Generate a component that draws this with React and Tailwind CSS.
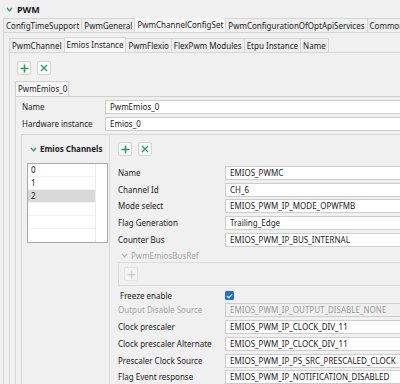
import React from "react";

const teal = "#1f9b73";

const Chevron = ({ color = teal }) => (
  <svg width="7" height="5" viewBox="0 0 7 5" className="shrink-0">
    <polyline points="1,1 3.5,3.8 6,1" fill="none" stroke={color} strokeWidth="1.3" />
  </svg>
);

const IconButton = ({ kind, disabled }) => (
  <div
    className={`w-[14px] h-[14px] flex items-center justify-center rounded-[2px] border ${
      disabled ? "border-[#e4e4e4] bg-[#f4f4f4]" : "border-[#d4d4d4] bg-[#f9f9f9]"
    }`}
  >
    {kind === "plus" ? (
      <svg width="9" height="9" viewBox="0 0 9 9">
        <path d="M4.5 0.5v8M0.5 4.5h8" stroke={disabled ? "#cfcfcf" : "#2e9d5e"} strokeWidth="1.6" />
      </svg>
    ) : (
      <svg width="8" height="8" viewBox="0 0 8 8">
        <path d="M1 1l6 6M7 1l-6 6" stroke={disabled ? "#cfcfcf" : "#2a9d74"} strokeWidth="1.4" />
      </svg>
    )}
  </div>
);

const Tab = ({ label, selected }) => (
  <div
    className={`px-[2px] border border-[#d6d6d6] -ml-px first:ml-0 whitespace-nowrap flex items-center ${
      selected ? "bg-[#f7f7f7] h-[16px] -mt-[1px]" : "bg-[#eeeeee] h-[15px]"
    }`}
  >
    {label}
  </div>
);

const Field = ({ value, disabled }) => (
  <div
    className={`h-[14px] flex-1 flex items-center pl-[4px] border border-[#cdcdcd] whitespace-nowrap overflow-hidden ${
      disabled ? "bg-[#efefef] text-[#9a9a9a]" : "bg-white"
    }`}
  >
    {value}
  </div>
);

const Row = ({ label, value, disabled }) => (
  <div className="h-[16.7px] flex items-start">
    <div className={`w-[107px] shrink-0 whitespace-nowrap overflow-hidden h-[14px] flex items-center ${disabled ? "text-[#a3a3a3]" : ""}`}>
      {label}
    </div>
    <Field value={value} disabled={disabled} />
  </div>
);

export default function App() {
  const topTabs = ["ConfigTimeSupport", "PwmGeneral", "PwmChannelConfigSet", "PwmConfigurationOfOptApiServices", "CommonPublishedInformation"];
  const subTabs = ["PwmChannel", "Emios Instance", "PwmFlexio", "FlexPwm Modules", "Etpu Instance", "Name"];
  const channels = ["0", "1", "2", "", "", ""];

  return (
    <div
      className="w-[400px] h-[384px] overflow-hidden bg-[#f0f0f0] text-[8px] text-[#1b1b1b] leading-none"
      style={{ fontFamily: '"Noto Sans", "Open Sans", sans-serif' }}
    >
      <div className="w-[440px]">
        {/* section header */}
        <div className="h-[18px] flex items-center pl-[6px] gap-[4px]">
          <Chevron />
          <span className="font-bold text-[9px]">PWM</span>
        </div>

        {/* top tabs */}
        <div className="flex pl-[3px] h-[15px] overflow-hidden">
          {topTabs.map((t, i) => (
            <Tab key={t} label={t} selected={i === 2} />
          ))}
        </div>

        <div className="ml-[3px] border-l border-[#d6d6d6] pl-[5px] pt-[5px] h-[360px]">
          {/* sub tabs */}
          <div className="flex h-[14px]">
            {subTabs.map((t, i) => (
              <Tab key={t} label={t} selected={i === 1} />
            ))}
          </div>

          <div className="border-l border-t border-[#d6d6d6] h-[340px]">
            <div className="flex gap-[6px] pl-[7px] pt-[8px] h-[28px]">
              <IconButton kind="plus" />
              <IconButton kind="x" />
            </div>

            {/* instance tab */}
            <div className="pl-[5px]">
              <div className="flex h-[16px]">
                <div className="px-[2px] h-[16px] border border-[#d0d0d0] bg-[#f7f7f7] flex items-center w-[54px]">PwmEmios_0</div>
                <div className="flex-1 border-b border-[#d0d0d0]" />
              </div>

              <div className="border-l border-[#d6d6d6] pt-[3px]">
                <div className="pl-[6px] flex flex-col">
                  <div className="h-[17px] flex items-start">
                    <div className="w-[83px] h-[14px] flex items-center">Name</div>
                    <Field value="PwmEmios_0" />
                  </div>
                  <div className="h-[17px] flex items-start">
                    <div className="w-[83px] h-[14px] flex items-center">Hardware instance</div>
                    <Field value="Emios_0" />
                  </div>
                </div>

                {/* group box */}
                <div className="ml-[5px] border-l border-t border-[#d6d6d6] h-[260px] flex">
                  {/* left column */}
                  <div className="w-[88px] shrink-0 border-r border-[#dadada] flex flex-col pl-[5px]">
                    <div className="h-[28px] flex items-center gap-[3px] pl-[3px]">
                      <Chevron />
                      <span className="font-bold">Emios Channels</span>
                    </div>
                    <div className="w-[81px] h-[80px] border border-[#a9a9a9] bg-white flex">
                      <div className="w-[67px] flex flex-col">
                        {channels.map((c, i) => (
                          <div
                            key={i}
                            className={`h-[13px] flex items-center pl-[3px] border-b border-[#f4f4f4] ${i === 2 ? "bg-[#d9d9d9]" : ""}`}
                          >
                            {c}
                          </div>
                        ))}
                      </div>
                      <div className="border-l border-[#ececec]" />
                    </div>
                  </div>

                  {/* right column */}
                  <div className="flex-1 pl-[8px] flex flex-col">
                    <div className="flex gap-[6px] pt-[7px] h-[31px]">
                      <IconButton kind="plus" />
                      <IconButton kind="x" />
                    </div>
                    <Row label="Name" value="EMIOS_PWMC" />
                    <Row label="Channel Id" value="CH_6" />
                    <Row label="Mode select" value="EMIOS_PWM_IP_MODE_OPWFMB" />
                    <Row label="Flag Generation" value="Trailing_Edge" />
                    <Row label="Counter Bus" value="EMIOS_PWM_IP_BUS_INTERNAL" />

                    <div className="h-[13px] flex items-center gap-[3px] pl-[3px] text-[#a3a3a3]">
                      <Chevron color="#b5b5b5" />
                      <span>PwmEmiosBusRef</span>
                    </div>
                    <div className="h-[24px] border border-[#dcdcdc] flex items-center pl-[5px]">
                      <IconButton kind="plus" disabled />
                    </div>

                    <div className="h-[17px] flex items-center pt-[2px]">
                      <div className="w-[107px] pl-[2px]">Freeze enable</div>
                      <div className="w-[9px] h-[9px] rounded-[1.5px] bg-[#1b6fd0] flex items-center justify-center">
                        <svg width="7" height="6" viewBox="0 0 7 6">
                          <polyline points="1,3 2.8,4.8 6,1.2" fill="none" stroke="white" strokeWidth="1.2" />
                        </svg>
                      </div>
                    </div>
                    <Row label="Output Disable Source" value="EMIOS_PWM_IP_OUTPUT_DISABLE_NONE" disabled />
                    <Row label="Clock prescaler" value="EMIOS_PWM_IP_CLOCK_DIV_11" />
                    <Row label="Clock prescaler Alternate" value="EMIOS_PWM_IP_CLOCK_DIV_11" />
                    <Row label="Prescaler Clock Source" value="EMIOS_PWM_IP_PS_SRC_PRESCALED_CLOCK" />
                    <Row label="Flag Event response" value="EMIOS_PWM_IP_NOTIFICATION_DISABLED" />
                  </div>
                </div>
              </div>
            </div>
          </div>
        </div>
      </div>
    </div>
  );
}
